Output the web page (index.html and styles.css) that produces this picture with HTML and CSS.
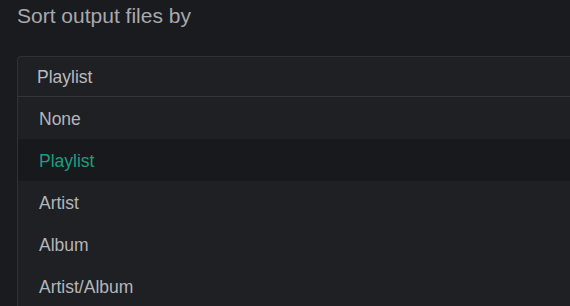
FILE: index.html
```html
<!DOCTYPE html>
<html>
<head>
  <title>Sort output files by</title>
  <link rel="stylesheet" href="styles.css">
</head>
<body>
  <div class="setting">
    <div class="label">Sort output files by</div>
    <div class="select">
      <div class="current">Playlist</div>
      <ul class="options">
        <li>None</li>
        <li class="selected">Playlist</li>
        <li>Artist</li>
        <li>Album</li>
        <li>Artist/Album</li>
      </ul>
    </div>
  </div>
</body>
</html>
```

FILE: styles.css
```css
html, body {
  margin: 0;
  height: 100%;
  overflow: hidden;
}

body {
  font-family: 'Liberation Sans', Arial, sans-serif;
  background: #1a1b1f;
  color: #b5b6ba;
}

.setting {
  padding: 3px 0 0 17px;
}

.label {
  font-size: 21px;
  line-height: 26px;
  color: #a8a9ae;
  margin-bottom: 27px;
}

.select {
  margin-right: -20px;
  background: #1f2024;
  border: 1px solid #303136;
  border-radius: 4px 0 0 0;
}

.current {
  box-sizing: border-box;
  height: 40px;
  padding: 2px 0 0 19px;
  line-height: 37px;
  font-size: 17.5px;
  color: #b9babe;
  border-bottom: 1px solid #34353a;
}

.options {
  list-style: none;
  margin: 0;
  padding: 0;
}

.options li {
  box-sizing: border-box;
  height: 42px;
  padding: 3px 0 0 21px;
  line-height: 39px;
  font-size: 17.5px;
}

.options li.selected {
  background: #18191c;
  color: #1b9e7f;
}
```
